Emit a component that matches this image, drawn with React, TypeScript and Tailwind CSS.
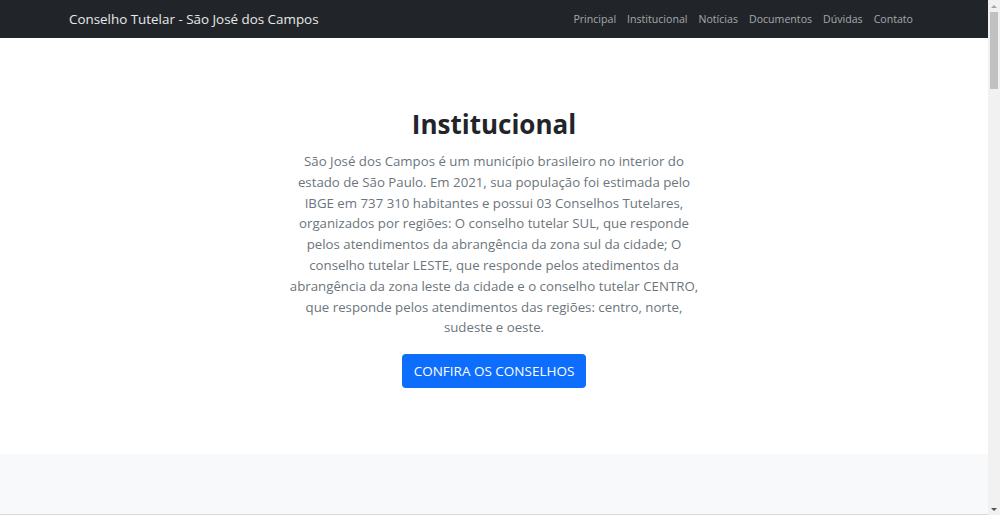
const lines = [
  'São José dos Campos é um município brasileiro no interior do',
  'estado de São Paulo. Em 2021, sua população foi estimada pelo',
  'IBGE em 737 310 habitantes e possui 03 Conselhos Tutelares,',
  'organizados por regiões: O conselho tutelar SUL, que responde',
  'pelos atendimentos da abrangência da zona sul da cidade; O',
  'conselho tutelar LESTE, que responde pelos atedimentos da',
  'abrangência da zona leste da cidade e o conselho tutelar CENTRO,',
  'que responde pelos atendimentos das regiões: centro, norte,',
  'sudeste e oeste.',
];

const links = ['Principal', 'Institucional', 'Notícias', 'Documentos', 'Dúvidas', 'Contato'];

function Scrollbar() {
  return (
    <div className="flex w-[12px] flex-col bg-[#f1f1f1]">
      <div className="flex h-[12px] items-center justify-center">
        <div className="h-0 w-0 border-x-[3px] border-b-[3px] border-x-transparent border-b-[#a3a3a3]" />
      </div>
      <div className="mx-auto h-[77px] w-[8px] bg-[#c1c1c1]" />
      <div className="flex-1" />
      <div className="flex h-[12px] items-center justify-center">
        <div className="h-0 w-0 border-x-[3px] border-t-[3px] border-x-transparent border-t-[#505050]" />
      </div>
    </div>
  );
}

export default function App() {
  return (
    <div className="flex h-[515px] overflow-hidden bg-white font-['Open_Sans',sans-serif]">
      <div className="flex min-w-0 flex-1 flex-col">
        <nav className="flex h-[38px] shrink-0 items-center justify-between bg-[#212529] pl-[69px] pr-[75px]">
          <a className="text-[13.4px] text-white/90">Conselho Tutelar - São José dos Campos</a>
          <ul className="flex gap-[11px] pt-[2px] text-[10.6px] text-white/60">
            {links.map((l) => (
              <li key={l}>{l}</li>
            ))}
          </ul>
        </nav>
        <section className="flex h-[416px] shrink-0 flex-col items-center pt-[68px]">
          <h1 className="text-[26px] font-bold leading-[36px] text-[#212529]">Institucional</h1>
          <p className="mt-[9px] text-center text-[13.25px] leading-[20.8px] text-[#6c757d]">
            {lines.map((l, i) => (
              <span key={i}>
                {l}
                {i < lines.length - 1 && <br />}
              </span>
            ))}
          </p>
          <button
            type="button"
            className="mt-[16px] h-[34px] w-[184px] rounded-[4px] bg-[#0d6efd] text-[13.5px] text-white"
          >
            CONFIRA OS CONSELHOS
          </button>
        </section>
        <section className="flex-1 border-b border-[#d8d8d8] bg-[#f8f9fa]" />
      </div>
      <Scrollbar />
    </div>
  );
}
